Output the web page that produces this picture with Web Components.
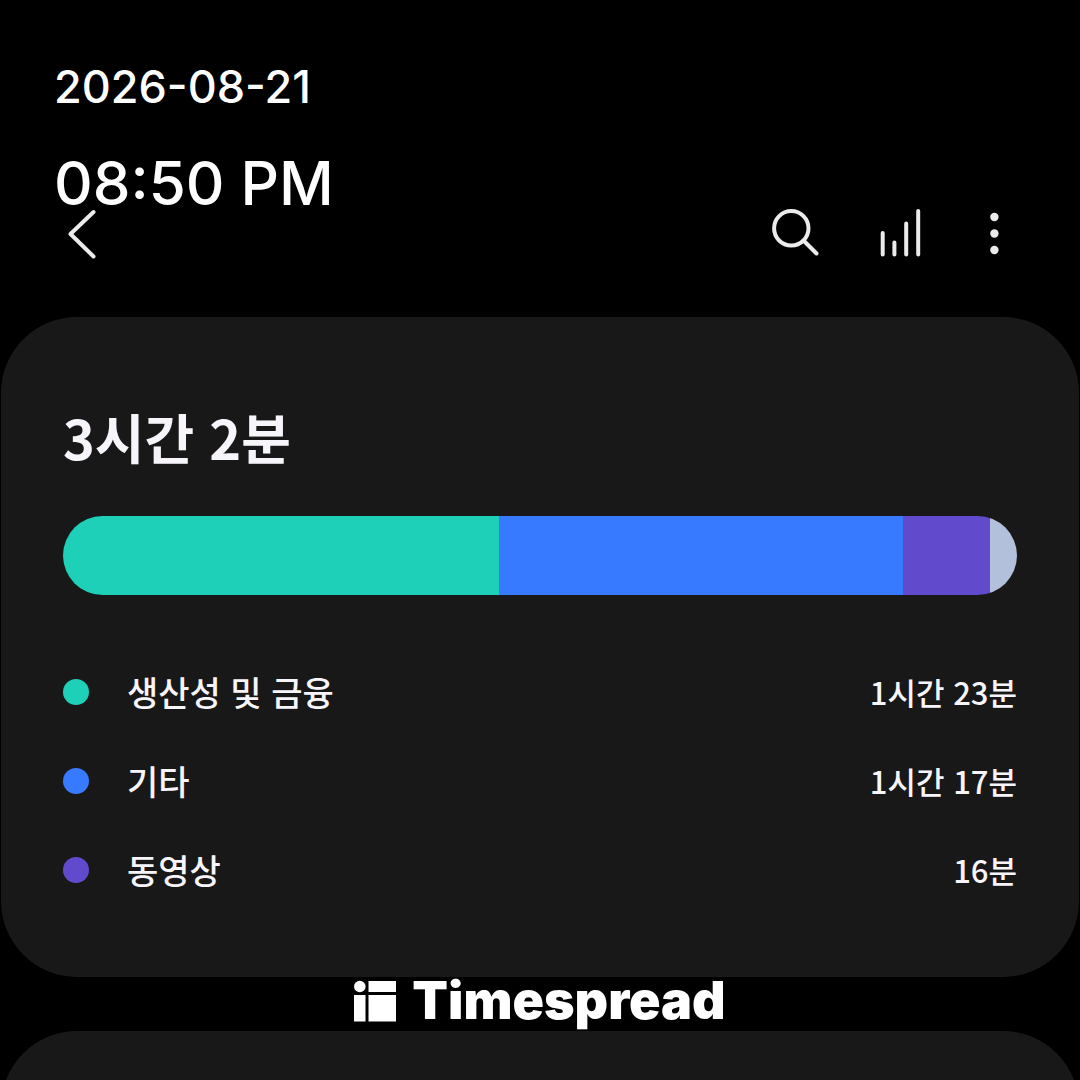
<!DOCTYPE html>
<html lang="ko">
<head>
<meta charset="utf-8">
<meta name="viewport" content="width=device-width, initial-scale=1">
<title>Timespread</title>
<style>
  :root {
    --color-bg: #000;
    --color-surface: #181818;
    --color-text: #f7f5fa;
    --color-productivity: #1ed0b8;
    --color-etc: #387aff;
    --color-video: #614acc;
    --color-rest: #b2c0db;
    --font-ui: Inter, "Noto Sans CJK KR", sans-serif;
    --font-ko: "Noto Sans CJK KR", sans-serif;
  }

  body {
    margin: 0;
    background: var(--color-bg);
    color: var(--color-text);
    font-family: var(--font-ko);
  }
</style>
</head>
<body>
<usage-screen>
  <time-stamp slot="stamp" date="2026-08-21" time="08:50 PM"></time-stamp>
  <app-toolbar></app-toolbar>
  <app-card>
    <usage-total>3시간 2분</usage-total>
    <usage-bar></usage-bar>
    <usage-row color="productivity"><span>생산성 및 금융</span><span slot="time">1시간 23분</span></usage-row>
    <usage-row color="etc"><span>기타</span><span slot="time">1시간 17분</span></usage-row>
    <usage-row color="video"><span>동영상</span><span slot="time">16분</span></usage-row>
  </app-card>
  <brand-mark></brand-mark>
  <next-card></next-card>
</usage-screen>

<script>
/**
 * UsageScreen Component
 * Page column; the stamp slot floats above the toolbar
 */
class UsageScreen extends HTMLElement {
  constructor() {
    super();
    this.attachShadow({ mode: 'open' }).innerHTML = `
      <style>
        :host {
          display: flex;
          flex-direction: column;
          position: relative;
          min-height: 100vh;
          box-sizing: border-box;
          padding: 205px 1px 0;
        }

        ::slotted([slot="stamp"]) {
          position: absolute;
          top: 59px;
          left: 54px;
        }
      </style>
      <slot name="stamp"></slot>
      <slot></slot>
    `;
  }
}

/**
 * TimeStamp Component
 * Attributes: date, time
 */
class TimeStamp extends HTMLElement {
  constructor() {
    super();
    this.attachShadow({ mode: 'open' }).innerHTML = `
      <style>
        :host {
          display: flex;
          flex-direction: column;
          gap: 28px;
          color: #fff;
          font-family: var(--font-ui);
          font-weight: 500;
          white-space: nowrap;
        }

        .date {
          font-size: 45px;
          line-height: 56px;
        }

        .time {
          font-size: 60px;
          line-height: 80px;
        }
      </style>
      <time class="date">${this.getAttribute('date')}</time>
      <time class="time">${this.getAttribute('time')}</time>
    `;
  }
}

/**
 * AppToolbar Component
 * Back on the left, actions on the right
 */
class AppToolbar extends HTMLElement {
  constructor() {
    super();
    this.attachShadow({ mode: 'open' }).innerHTML = `
      <style>
        :host {
          display: flex;
          align-items: center;
          justify-content: space-between;
          padding: 0 56px;
          margin-bottom: 56px;
        }

        .actions {
          display: flex;
          gap: 44px;
        }

        button {
          display: block;
          width: 56px;
          height: 56px;
          padding: 0;
          border: 0;
          background: none;
          color: #ebebeb;
        }

        svg {
          display: block;
          fill: none;
          stroke: currentColor;
          stroke-width: 4;
          stroke-linecap: round;
        }
      </style>
      <button type="button" aria-label="뒤로">
        <svg width="56" height="56" viewBox="0 0 56 56"><path d="M36.500 7 13.500 29l23 22.500" stroke-linejoin="round"/></svg>
      </button>
      <div class="actions">
        <button type="button" aria-label="검색">
          <svg width="56" height="56" viewBox="0 0 56 56"><circle cx="24.3" cy="23.3" r="17.2"/><path d="M36.5 35.5 49.500 48.500"/></svg>
        </button>
        <button type="button" aria-label="통계">
          <svg width="56" height="56" viewBox="0 0 56 56" stroke-linecap="butt"><path d="M15.7 28v21.500M27.4 37.500v12M39.2 18.500v31M51.200 6v43.500"/></svg>
        </button>
        <button type="button" aria-label="더보기">
          <svg width="56" height="56" viewBox="0 0 56 56"><g fill="currentColor" stroke="none"><circle cx="27.400" cy="12" r="4.200"/><circle cx="27.400" cy="28.500" r="4.200"/><circle cx="27.400" cy="45" r="4.200"/></g></svg>
        </button>
      </div>
    `;
  }
}

/**
 * AppCard Component
 * Rounded surface
 */
class AppCard extends HTMLElement {
  constructor() {
    super();
    this.attachShadow({ mode: 'open' }).innerHTML = `
      <style>
        :host {
          display: block;
          padding: 88px 62px 63px;
          border-radius: 76px;
          background: var(--color-surface);
        }
      </style>
      <slot></slot>
    `;
  }
}

/**
 * NextCard Component
 * Top edge of the following card, cut off by the end of the page
 */
class NextCard extends HTMLElement {
  constructor() {
    super();
    this.attachShadow({ mode: 'open' }).innerHTML = `
      <style>
        :host {
          display: block;
          flex: 1 0 49px;
          height: 49px;
          overflow: hidden;
        }

        div {
          height: 100vh;
          border-radius: 76px 76px 0 0;
          background: var(--color-surface);
        }
      </style>
      <div></div>
    `;
  }
}

class UsageTotal extends HTMLElement {
  constructor() {
    super();
    this.attachShadow({ mode: 'open' }).innerHTML = `
      <style>
        :host {
          display: block;
          margin-bottom: 47px;
        }

        h1 {
          margin: 0;
          font-size: 54px;
          font-weight: 700;
          line-height: 64px;
        }
      </style>
      <h1><slot></slot></h1>
    `;
  }
}

/**
 * UsageBar Component
 * Share of each category in the total
 */
class UsageBar extends HTMLElement {
  constructor() {
    super();
    this.attachShadow({ mode: 'open' }).innerHTML = `
      <style>
        :host {
          display: flex;
          height: 79px;
          margin-bottom: 52px;
          border-radius: 40px;
          overflow: hidden;
        }

        .productivity { flex: 436; background: var(--color-productivity); }
        .etc { flex: 404; background: var(--color-etc); }
        .video { flex: 87; background: var(--color-video); }
        .rest { flex: 27; background: var(--color-rest); }
      </style>
      <div class="productivity"></div>
      <div class="etc"></div>
      <div class="video"></div>
      <div class="rest"></div>
    `;
  }
}

/**
 * UsageRow Component
 *
 * Slots:
 * - default: category name
 * - time: time spent
 */
class UsageRow extends HTMLElement {
  constructor() {
    super();
    this.attachShadow({ mode: 'open' }).innerHTML = `
      <style>
        :host {
          display: flex;
          align-items: center;
          height: 89px;
          font-size: 34px;
          font-weight: 500;
          line-height: 40px;
        }

        .dot {
          width: 26px;
          height: 26px;
          margin-right: 38px;
          border-radius: 50%;
          background: var(--color-${this.getAttribute('color')});
        }

        .time {
          margin-left: auto;
          font-size: 31px;
        }
      </style>
      <span class="dot"></span>
      <slot></slot>
      <span class="time"><slot name="time"></slot></span>
    `;
  }
}

class BrandMark extends HTMLElement {
  constructor() {
    super();
    this.attachShadow({ mode: 'open' }).innerHTML = `
      <style>
        :host {
          display: flex;
          align-items: center;
          justify-content: center;
          gap: 16px;
          height: 48px;
          margin-bottom: 6px;
          color: #fff;
          font-family: var(--font-ui);
          font-size: 52px;
          font-weight: 900;
          line-height: 48px;
        }

        svg {
          display: block;
          fill: currentColor;
        }
      </style>
      <svg width="42" height="42" viewBox="0 0 42 42" aria-hidden="true">
        <circle cx="5.800" cy="6.500" r="5.800"/>
        <path d="M14.500 1H42v11H14.500zM0 15h11.500v26.500H0zM14.500 15H42v26.500H14.500z"/>
      </svg>
      <span>Timespread</span>
    `;
  }
}

// Register custom elements
customElements.define('usage-screen', UsageScreen);
customElements.define('time-stamp', TimeStamp);
customElements.define('app-toolbar', AppToolbar);
customElements.define('app-card', AppCard);
customElements.define('next-card', NextCard);
customElements.define('usage-total', UsageTotal);
customElements.define('usage-bar', UsageBar);
customElements.define('usage-row', UsageRow);
customElements.define('brand-mark', BrandMark);
</script>
</body>
</html>
